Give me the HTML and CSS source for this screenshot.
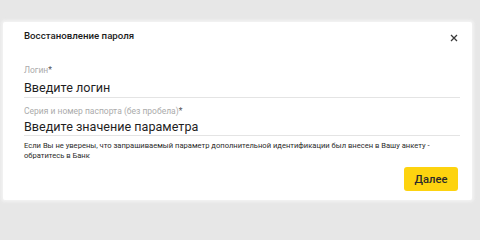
FILE: index.html
```html
<!DOCTYPE html>
<html lang="ru">
<head>
<meta charset="utf-8">
<title>Восстановление пароля</title>
<link rel="stylesheet" href="styles.css">
</head>
<body>
<div class="page">
  <div class="dialog">
    <div class="header">
      <div class="title">Восстановление пароля</div>
      <button class="close" aria-label="Закрыть">
        <svg width="8" height="8" viewBox="0 0 8 8"><path d="M1 1L7 7M7 1L1 7" stroke="#3a3a3a" stroke-width="1.3" fill="none"/></svg>
      </button>
    </div>
    <div class="body">
      <div class="field">
        <div class="label">Логин<span class="req">*</span></div>
        <div class="input">Введите логин</div>
      </div>
      <div class="field field-2">
        <div class="label">Серия и номер паспорта (без пробела)<span class="req">*</span></div>
        <div class="input input-2">Введите значение параметра</div>
      </div>
      <div class="hint">Если Вы не уверены, что запрашиваемый параметр дополнительной идентификации был внесен в Вашу анкету - обратитесь в Банк</div>
    </div>
    <div class="footer">
      <button class="next">Далее</button>
    </div>
  </div>
</div>
</body>
</html>
```
FILE: styles.css
```css
html, body {
  margin: 0;
  padding: 0;
}
body {
  background: #e7e7e7;
  font-family: Roboto, "Noto Sans", Arial, sans-serif;
  width: 480px;
  height: 204px;
  overflow: hidden;
}
.page {
  padding: 22px 0 0 3px;
}
.dialog {
  width: 469px;
  height: 178px;
  background: #ffffff;
  border-radius: 2px;
  box-shadow: 0 0 3px 2px rgba(245, 245, 245, 0.8);
  box-sizing: border-box;
  padding: 6px 14px 0 21px;
  display: flex;
  flex-direction: column;
}
.header {
  display: flex;
  align-items: center;
  justify-content: space-between;
  height: 16px;
}
.title {
  font-size: 9.7px;
  font-weight: 500;
  color: #1c1c1c;
  line-height: 16px;
}
.close {
  border: 0;
  background: none;
  padding: 0;
  width: 8px;
  height: 8px;
  display: flex;
  margin-top: 4px;
  margin-right: 0;
}
.body {
  margin-right: -2px;
  margin-top: 21px;
}
.field .label {
  font-size: 8.5px;
  line-height: 10px;
  color: #ababab;
}
.req {
  color: #555555;
}
.input {
  margin-top: 3px;
  height: 19px;
  font-size: 12.6px;
  line-height: 19px;
  color: #1f1f1f;
  border-bottom: 1px solid #e4e4e4;
}
.field-2 {
  margin-top: 8px;
}
.input-2 {
  height: 16px;
  line-height: 16px;
}
.hint {
  margin-top: 5px;
  font-size: 7.6px;
  line-height: 9.5px;
  color: #2a2a2a;
  width: 420px;
}
.footer {
  display: flex;
  justify-content: flex-end;
  margin-top: 7px;
}
.next {
  width: 54px;
  height: 24px;
  border: 0;
  border-radius: 3px;
  background: #fdd30f;
  font-family: Roboto, "Noto Sans", Arial, sans-serif;
  font-size: 11.2px;
  font-weight: 500;
  color: #2a2a2a;
  padding: 0;
}
```
